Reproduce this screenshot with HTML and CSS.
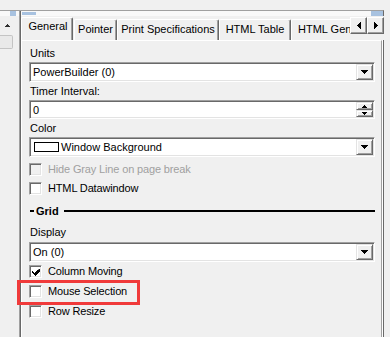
FILE: index.html
```html
<!DOCTYPE html>
<html>
<head>
<meta charset="utf-8">
<link rel="stylesheet" href="styles.css">
</head>
<body>
<div class="ruler">
  <span class="rb rb-a"></span>
  <span class="rl"></span>
  <span class="rb rb-b"></span>
  <span class="rfill"></span>
  <span class="rb rb-c"></span>
</div>
<div class="main">
  <div class="vscroll">
    <svg class="vs-up" width="5" height="3" viewBox="0 0 5 3"><path d="M2 0h1v1h1v1h1v1h-5v-1h1v-1h1z" fill="#303030"/></svg>
    <span class="thumb"></span>
  </div>
  <div class="divider"></div>
  <div class="tabctl">
    <div class="tabrow">
      <div class="tabs">
        <div class="tab active t-general">General</div>
        <div class="tab t-pointer">Pointer</div>
        <div class="tab t-print">Print Specifications</div>
        <div class="tab t-html">HTML Table</div>
        <div class="tab t-gen">HTML Generation</div>
      </div>
      <div class="tabnav">
        <div class="navbtn"><svg width="4" height="7" viewBox="0 0 4 7"><path d="M3 0h1v7h-1v-1h-1v-1h-1v-1h-1v-1h1v-1h1v-1h1z"/></svg></div>
        <div class="navbtn"><svg width="4" height="7" viewBox="0 0 4 7"><path d="M0 0h1v1h1v1h1v1h1v1h-1v1h-1v1h-1v1h-1z"/></svg></div>
      </div>
    </div>
    <div class="panel">
      <div class="lbl l-first">Units</div>
      <div class="combo">
        <span class="val">PowerBuilder (0)</span>
        <span class="dd"><svg width="7" height="4" viewBox="0 0 7 4"><path d="M0 0h7v1h-1v1h-1v1h-1v1h-1v-1h-1v-1h-1v-1h-1z"/></svg></span>
      </div>
      <div class="lbl">Timer Interval:</div>
      <div class="spin">
        <span class="val">0</span>
        <span class="spinbtns">
          <span class="sb sb-up"><svg width="5" height="3" viewBox="0 0 5 3"><path d="M2 0h1v1h1v1h1v1h-5v-1h1v-1h1z"/></svg></span>
          <span class="sb sb-down"><svg width="5" height="3" viewBox="0 0 5 3"><path d="M0 0h5v1h-1v1h-1v1h-1v-1h-1v-1h-1z"/></svg></span>
        </span>
      </div>
      <div class="lbl">Color</div>
      <div class="combo">
        <span class="swatch"></span>
        <span class="val val-color">Window Background</span>
        <span class="dd"><svg width="7" height="4" viewBox="0 0 7 4"><path d="M0 0h7v1h-1v1h-1v1h-1v1h-1v-1h-1v-1h-1v-1h-1z"/></svg></span>
      </div>
      <div class="check check-first disabled"><span class="box"></span><span class="ctext">Hide Gray Line on page break</span></div>
      <div class="check check-second"><span class="box"></span><span class="ctext">HTML Datawindow</span></div>
      <div class="grouphdr"><span class="dash"></span><span class="gtitle">Grid</span><span class="gline"></span></div>
      <div class="lbl l-display">Display</div>
      <div class="combo combo-display">
        <span class="val">On (0)</span>
        <span class="dd"><svg width="7" height="4" viewBox="0 0 7 4"><path d="M0 0h7v1h-1v1h-1v1h-1v1h-1v-1h-1v-1h-1v-1h-1z"/></svg></span>
      </div>
      <div class="check check-col"><span class="box"><svg width="9" height="9" viewBox="0 0 9 9"><path d="M7 1h1v3h-1v1h-1v1h-1v1h-1v1h-1v-1h-1v-1h-1v-1h-1v-2h1v1h1v1h1v-1h1v-1h1v-1h1z"/></svg></span><span class="ctext">Column Moving</span></div>
      <div class="check check-next mouse"><span class="box"></span><span class="ctext">Mouse Selection</span><span class="hl"></span></div>
      <div class="check check-next"><span class="box"></span><span class="ctext">Row Resize</span></div>
    </div>
  </div>
</div>
</body>
</html>
```

FILE: styles.css
```css
html, body {
  margin: 0;
  padding: 0;
}
body {
  width: 390px;
  height: 337px;
  overflow: hidden;
  background: #f0f0f0;
  font-family: "Liberation Sans", Arial, sans-serif;
  font-size: 11px;
  color: #000;
}

/* top ruler strip */
.ruler {
  margin-top: 10px;
  height: 5px;
  box-sizing: content-box;
  border-top: 1px solid #a0a0a0;
  border-right: 1px solid #696969;
  background: #f9f9f9;
  display: flex;
  align-items: flex-start;
  width: 383px;
}
.rb { display: block; background: #a8c2e0; }
.rb-a { margin-left: 10px; width: 6px; height: 5px; }
.rl { display: block; margin-left: 3px; width: 1px; height: 5px; border-left: 1px solid #a0a0a0; background: #696969; }
.rb-b { margin-left: 1px; margin-top: 1px; width: 14px; height: 3px; }
.rfill { flex: 1; }
.rb-c { width: 12px; height: 5px; }

/* main area */
.main {
  display: flex;
  height: 321px;
}
.vscroll {
  width: 19px;
  display: flex;
  flex-direction: column;
  align-items: flex-start;
}
.vs-up { display: block; margin-top: 8px; margin-left: 5px; }
.thumb {
  display: block;
  margin-top: 8px;
  width: 13px;
  height: 14px;
  box-sizing: border-box;
  background: #e9e9e9;
  border: 1px solid #c4c4c4;
  border-left: none;
  border-radius: 0 2px 2px 0;
}
.divider {
  width: 1px;
  border-left: 1px solid #a0a0a0;
  background: #696969;
}

.tabctl {
  width: 363px;
  display: flex;
  flex-direction: column;
}
.tabrow {
  height: 24px;
  display: flex;
}
.tabs {
  width: 329px;
  height: 24px;
  display: flex;
  align-items: flex-end;
  overflow: hidden;
  flex: none;
}
.tab {
  flex: none;
  height: 21px;
  box-sizing: border-box;
  border-top: 1px solid #fff;
  border-left: 1px solid #fff;
  border-right: 1px solid #696969;
  box-shadow: inset -1px 0 0 #a0a0a0;
  border-radius: 2px 2px 0 0;
  padding-top: 3px;
  line-height: 13px;
  text-align: center;
  white-space: nowrap;
}
.tab.active {
  height: 24px;
  margin-bottom: -1px;
  padding-top: 2px;
  position: relative;
  z-index: 1;
  background: #f0f0f0;
  margin-right: 1px;
}
.t-general { width: 52px; padding-left: 2px; }
.t-pointer { width: 43px; }
.t-print { width: 102px; }
.t-html { width: 72px; }
.t-gen { width: 90px; text-align: left; padding-left: 6px; }

.tabnav {
  display: flex;
  margin-top: 1px;
  height: 17px;
}
.navbtn {
  width: 17px;
  height: 17px;
  box-sizing: border-box;
  background: #f0f0f0;
  border: 1px solid;
  border-color: #fff #696969 #696969 #fff;
  box-shadow: inset -1px -1px 0 #a0a0a0;
  display: flex;
  align-items: center;
  justify-content: center;
}
.navbtn svg { display: block; fill: #000; }

.panel {
  flex: 1;
  margin-right: 2px;
  box-sizing: border-box;
  border-top: 1px solid #fff;
  border-left: 1px solid #fff;
  border-right: 1px solid #a0a0a0;
  box-shadow: 1px 0 0 #fff, 2px 0 0 #696969;
  padding: 0 6px 0 7px;
  display: flex;
  flex-direction: column;
}

.lbl {
  height: 13px;
  line-height: 13px;
  padding-left: 1px;
  margin-top: 3px;
  white-space: nowrap;
}
.l-first { margin-top: 6px; }
.l-display { margin-top: 8px; }

.combo, .spin {
  display: flex;
  align-items: center;
  height: 20px;
  box-sizing: border-box;
  margin-top: 2px;
  border: 1px solid;
  border-color: #a0a0a0 #fff #fff #a0a0a0;
  box-shadow: inset 1px 1px 0 #696969, inset -1px -1px 0 #e3e3e3;
  background: #fff;
  padding: 1px;
}
.combo-display { margin-top: 3px; }
.spin { height: 19px; }
.val {
  flex: 1;
  padding-left: 2px;
  line-height: 16px;
  white-space: nowrap;
}
.swatch {
  display: block;
  margin-left: 3px;
  width: 25px;
  height: 10px;
  box-sizing: border-box;
  border: 1px solid #000;
  background: #fff;
}
.dd, .sb {
  display: flex;
  align-items: center;
  justify-content: center;
  width: 17px;
  box-sizing: border-box;
  background: #f0f0f0;
  border: 1px solid;
  border-color: #e3e3e3 #696969 #696969 #e3e3e3;
  box-shadow: inset 1px 1px 0 #fff, inset -1px -1px 0 #a0a0a0;
}
.dd { height: 16px; }
.dd svg, .sb svg { display: block; fill: #000; }
.spinbtns {
  display: flex;
  flex-direction: column;
  height: 15px;
}
.sb-up { height: 8px; }
.sb-down { height: 7px; }

.check {
  display: flex;
  align-items: center;
  height: 13px;
  margin-top: 7px;
  white-space: nowrap;
}
.check-first { margin-top: 6px; }
.check-second { margin-top: 6px; }
.check-col { margin-top: 3px; }
.box {
  width: 13px;
  height: 13px;
  box-sizing: border-box;
  flex: none;
  border: 1px solid;
  border-color: #a0a0a0 #fff #fff #a0a0a0;
  box-shadow: inset 1px 1px 0 #696969, inset -1px -1px 0 #e3e3e3;
  background: #fff;
  display: flex;
  align-items: center;
  justify-content: center;
}
.box svg { display: block; fill: #000; margin-left: 1px; margin-top: 1px; }
.ctext {
  margin-left: 6px;
  line-height: 13px;
  letter-spacing: -0.15px;
}
.disabled .box { background: #f0f0f0; }
.disabled .ctext { color: #a0a0a0; }

.grouphdr {
  display: flex;
  align-items: center;
  height: 14px;
  margin-top: 9px;
  padding-left: 1px;
}
.dash { width: 4px; height: 2px; background: #000; }
.gtitle { font-weight: bold; margin-left: 2px; line-height: 13px; }
.gline { flex: 1; height: 2px; background: #000; margin-left: 5px; }

.mouse { position: relative; }
.hl {
  position: absolute;
  left: -12px;
  top: -5px;
  width: 123px;
  height: 25px;
  box-sizing: border-box;
  border: 3px solid #f03a3a;
  z-index: 2;
}
```
